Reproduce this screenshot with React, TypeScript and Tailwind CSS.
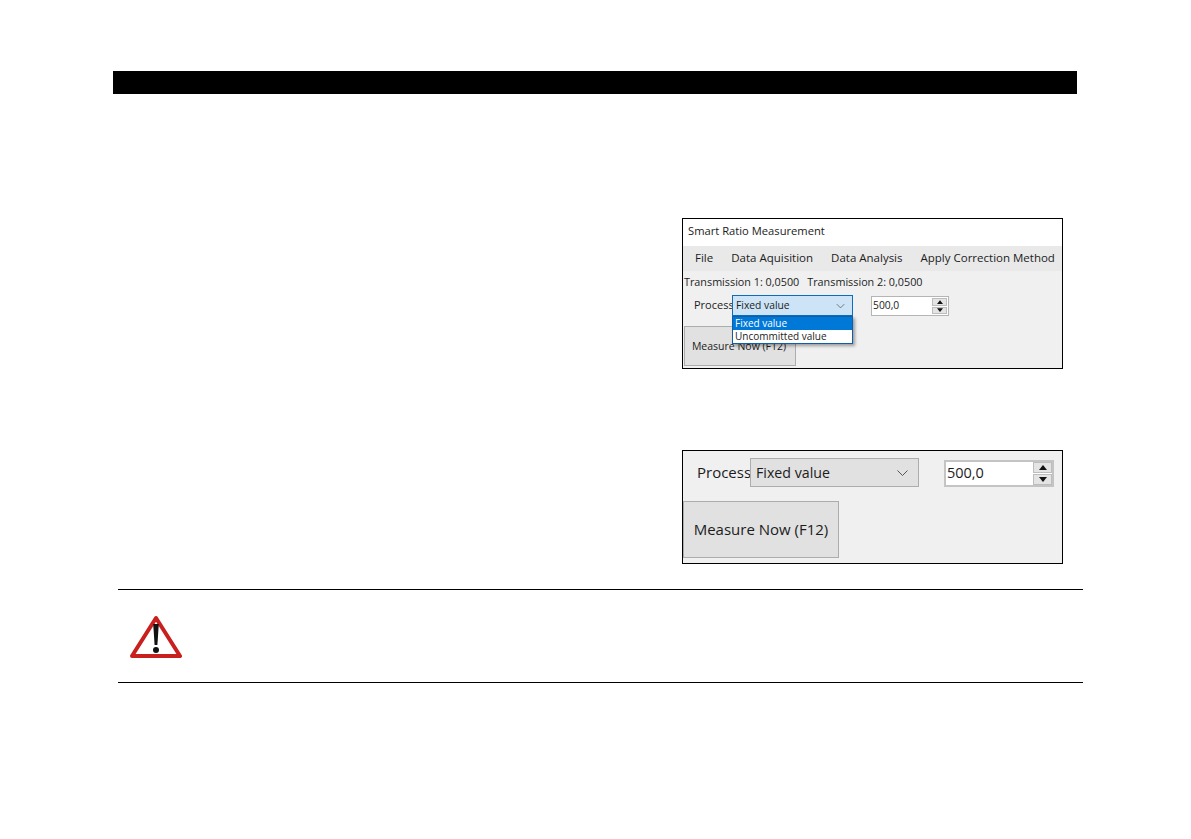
import React from 'react';

const winFont = { fontFamily: '"Open Sans", "Noto Sans", sans-serif' };

function ChevronDown({ className }: { className?: string }) {
    return (
        <svg viewBox="0 0 12 8" className={className} fill="none" stroke="#555" strokeWidth="1">
            <path d="M1 1.5 L6 6.5 L11 1.5" />
        </svg>
    );
}

function Spinner({ large }: { large?: boolean }) {
    const arrowCls = large ? 'w-[8px] h-[5px]' : 'w-[6px] h-[4px]';
    return (
        <div className={large ? 'flex flex-col w-[19px] h-[23px] gap-px' : 'flex flex-col w-[15px] h-[16px] gap-px'}>
            <div className="flex-1 flex items-center justify-center bg-[#e4e4e4] border border-[#bdbdbd]">
                <svg viewBox="0 0 8 5" className={arrowCls}><path d="M4 0 L8 5 L0 5 Z" fill="#111" /></svg>
            </div>
            <div className="flex-1 flex items-center justify-center bg-[#e4e4e4] border border-[#bdbdbd]">
                <svg viewBox="0 0 8 5" className={arrowCls}><path d="M0 0 L8 0 L4 5 Z" fill="#111" /></svg>
            </div>
        </div>
    );
}

function TopWindow() {
    return (
        <div className="w-[381px] h-[151px] border border-black bg-[#f0f0f0] text-[#1c1c1c] flex flex-col" style={winFont}>
            <div className="h-[27px] bg-white flex items-center pl-[5px] pb-[3px] text-[11.2px]">Smart Ratio Measurement</div>
            <div className="h-[25px] bg-[#e9e9e9] flex items-center pl-[12px] pb-[2px] gap-[18px] text-[11.5px] whitespace-nowrap">
                <span>File</span>
                <span>Data Aquisition</span>
                <span>Data Analysis</span>
                <span>Apply Correction Method</span>
            </div>
            <div className="h-[22px] flex items-center pl-[1px] gap-[8px] text-[10.8px] whitespace-nowrap">
                <span>Transmission 1: 0,0500</span>
                <span>Transmission 2: 0,0500</span>
            </div>
            <div className="flex items-start pl-[11px] pt-[2px] h-[33px]">
                <span className="w-[38px] overflow-hidden text-[11px] leading-[20px] whitespace-nowrap">Process</span>
                <div className="relative">
                    <div className="w-[121px] h-[21px] border border-[#0f6cbd] bg-[#cde4f7] flex items-center justify-between pl-[3px] pr-[7px] text-[10.3px]">
                        <span>Fixed value</span>
                        <ChevronDown className="w-[9px] h-[6px]" />
                    </div>
                    <div className="absolute left-0 top-[21px] w-[121px] h-[28px] border border-[#0f5fa8] bg-white text-[10px] leading-[13px] shadow-[2px_2px_3px_rgba(0,0,0,0.35)] z-10">
                        <div className="bg-[#0078d7] text-white pl-[2px]">Fixed value</div>
                        <div className="pl-[2px]">Uncommitted value</div>
                    </div>
                </div>
                <div className="ml-[18px] mt-px w-[78px] h-[20px] border border-[#b5b5b5] bg-white flex items-center justify-between pl-[1px] pr-px text-[10.3px]">
                    <span>500,0</span>
                    <Spinner />
                </div>
            </div>
            <div className="pl-px">
                <div className="w-[112px] h-[40px] border border-[#adadad] bg-[#e1e1e1] flex items-center justify-center pt-px pr-[2px] text-[10.5px] whitespace-nowrap">
                    Measure Now (F12)
                </div>
            </div>
        </div>
    );
}

function BottomWindow() {
    return (
        <div className="w-[381px] h-[114px] border border-black bg-[#f0f0f0] text-[#1c1c1c] flex flex-col" style={winFont}>
            <div className="flex items-start pl-[14px] pt-[7px] h-[50px]">
                <span className="w-[53px] overflow-hidden text-[15px] leading-[28px] whitespace-nowrap">Process</span>
                <div className="w-[169px] h-[29px] border border-[#adadad] bg-[#e1e1e1] flex items-center justify-between pl-[5px] pr-[9px] text-[14.2px]">
                    <span>Fixed value</span>
                    <ChevronDown className="w-[13px] h-[8px]" />
                </div>
                <div className="ml-[25px] mt-[2px] w-[110px] h-[27px] border-2 border-[#c4c4c4] bg-white flex items-center justify-between pl-px text-[14.5px]">
                    <span className="-mt-[2px]">500,0</span>
                    <Spinner large />
                </div>
            </div>
            <div>
                <div className="w-[156px] h-[57px] border border-[#adadad] bg-[#e1e1e1] flex items-center justify-center text-[15px] whitespace-nowrap">
                    Measure Now (F12)
                </div>
            </div>
        </div>
    );
}

function WarningIcon() {
    return (
        <svg viewBox="0 0 52 43" className="w-[52px] h-[43px]">
            <path d="M26 3 L50 41 L2 41 Z" fill="#fff" stroke="#c9201f" strokeWidth="4" strokeLinejoin="round" />
            <path d="M23.2 9 L28.8 9 L27.4 30 L24.6 30 Z" fill="#111" />
            <circle cx="26" cy="35" r="3" fill="#111" />
        </svg>
    );
}

export default function App() {
    return (
        <div className="w-[1191px] h-[839px] bg-white overflow-hidden pt-[71px]">
            <div className="ml-[113px] w-[964px] h-[23px] bg-black" />

            <div className="ml-[682px] mt-[124px] flex flex-col gap-[81px]">
                <TopWindow />
                <BottomWindow />
            </div>

            <div className="ml-[118px] mt-[25px] w-[965px] h-[94px] border-t border-b border-black flex items-center pl-[12px]">
                <WarningIcon />
            </div>
        </div>
    );
}
